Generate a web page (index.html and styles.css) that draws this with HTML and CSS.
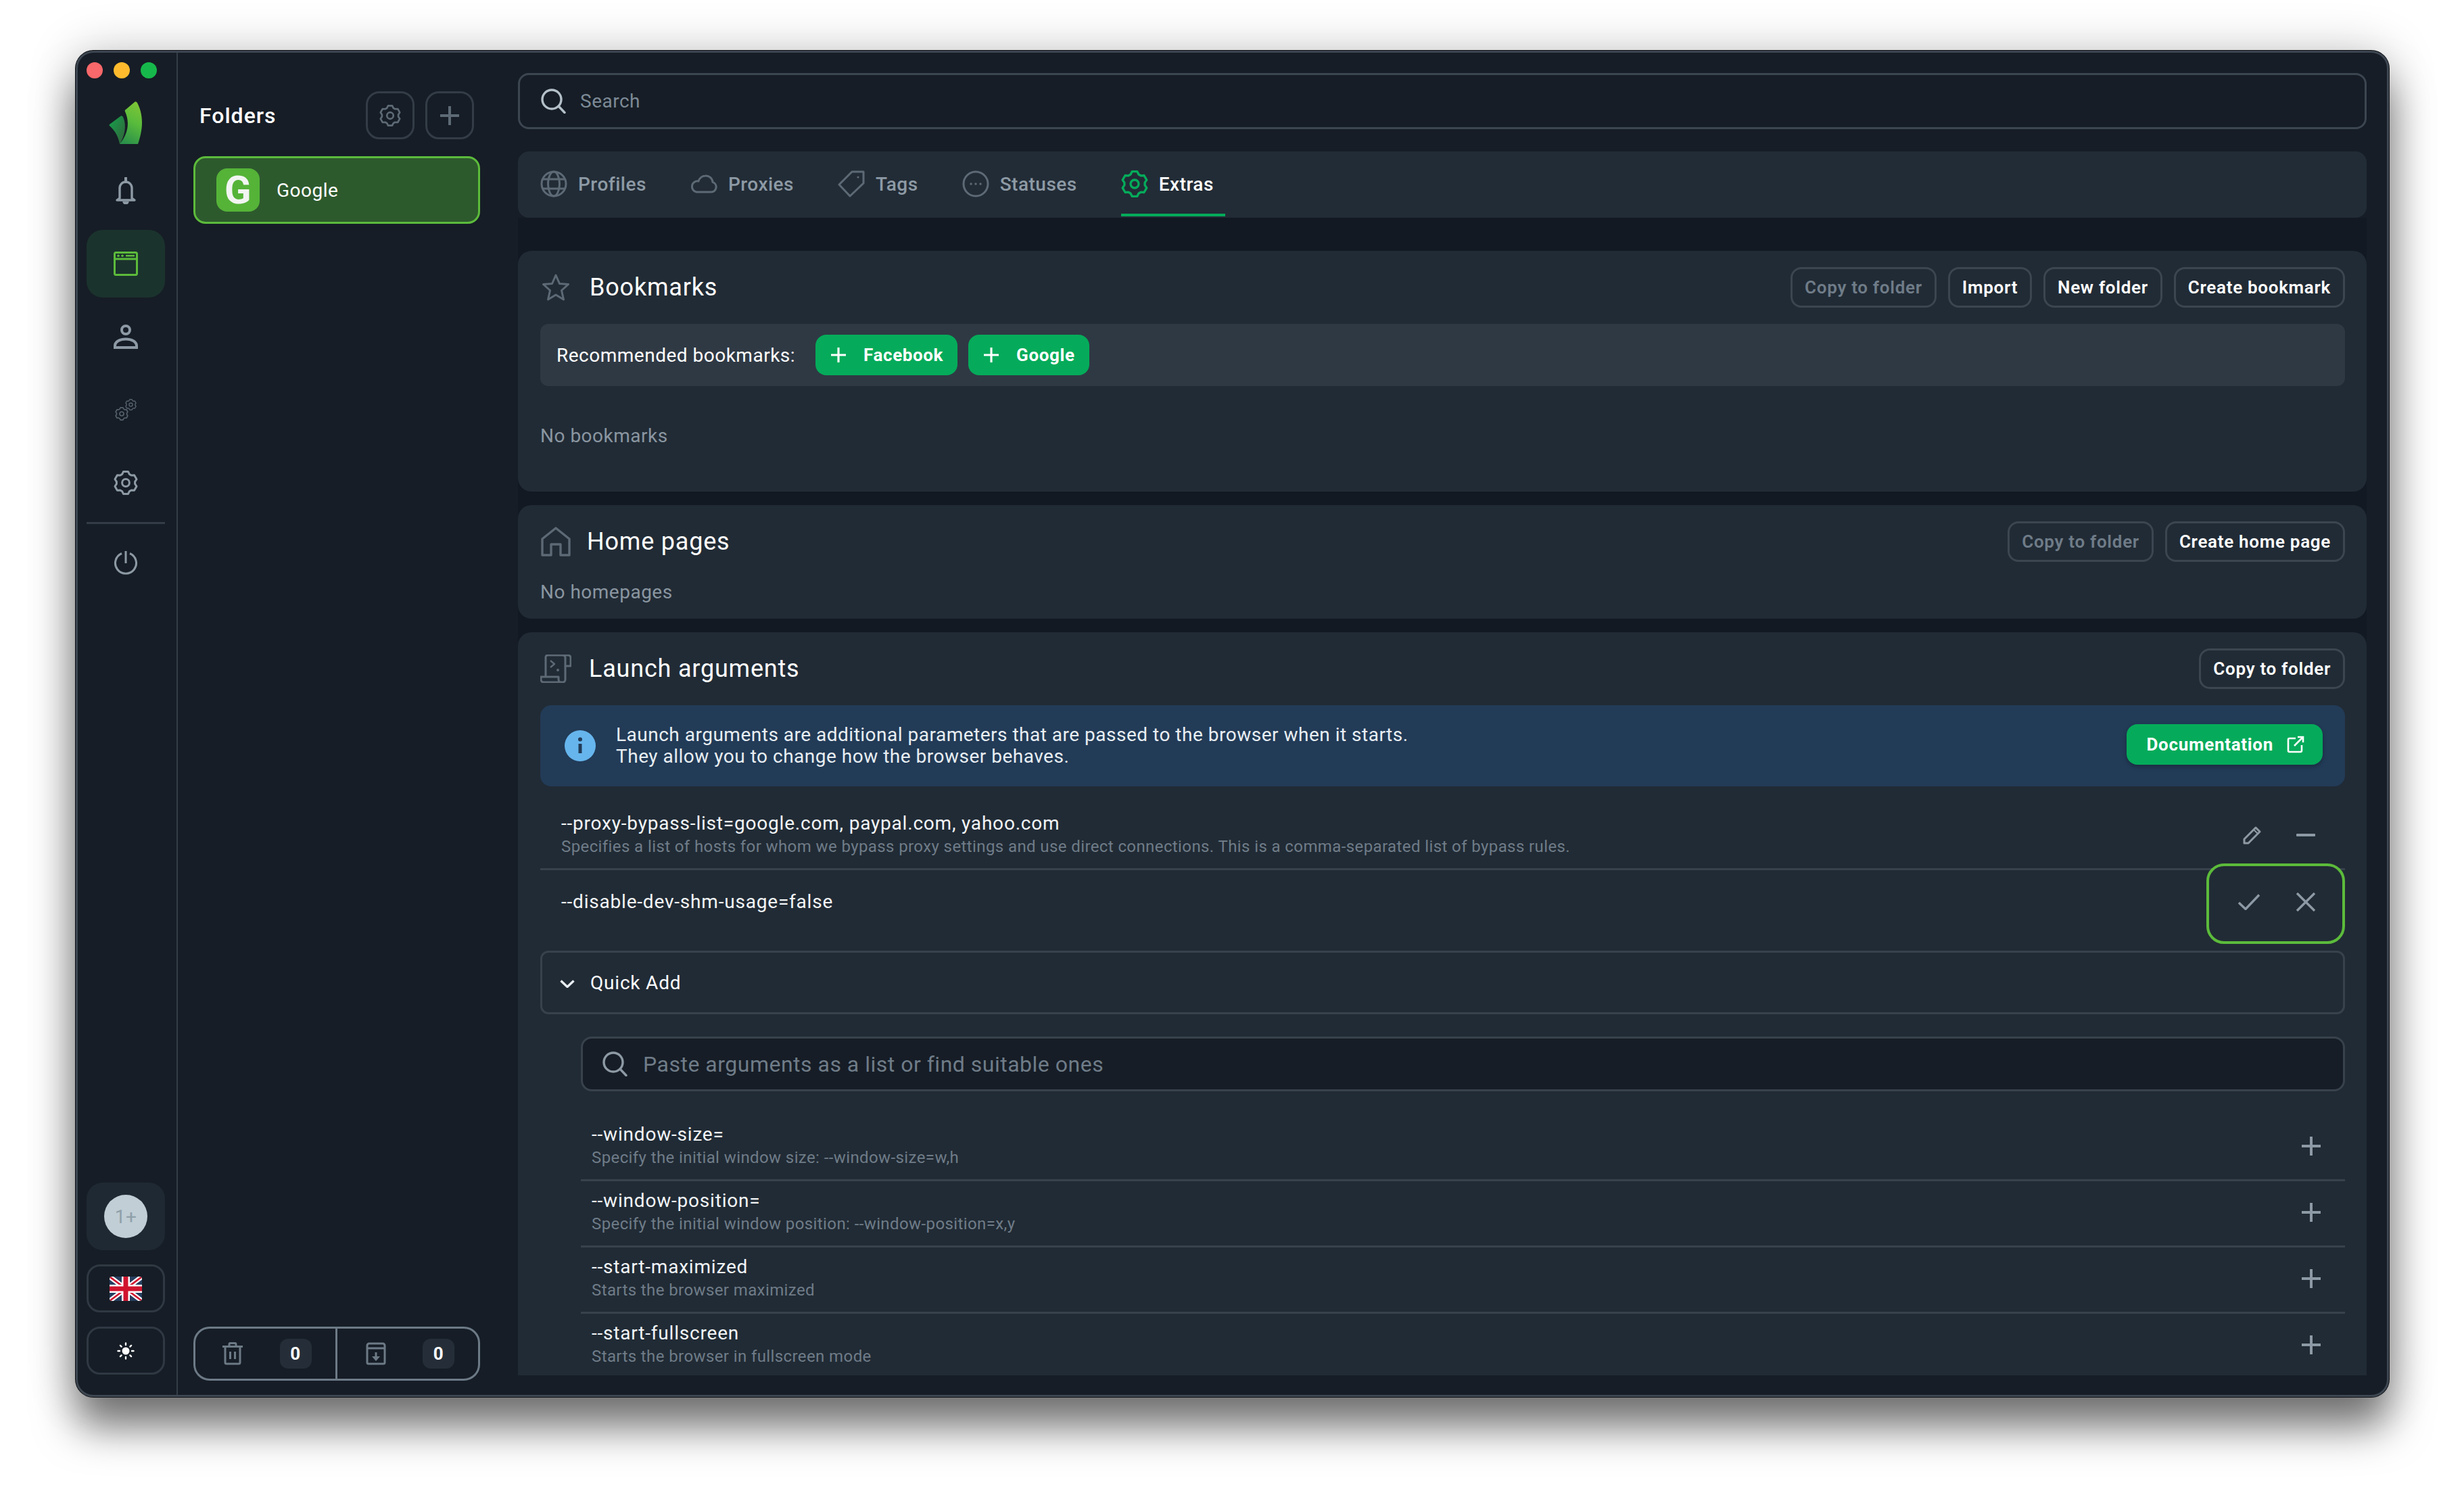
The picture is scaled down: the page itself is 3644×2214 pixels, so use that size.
FILE: index.html
```html
<!DOCTYPE html>
<html lang="en">
<head>
    <meta charset="UTF-8">
    <title>Extras</title>
    <link rel="stylesheet" href="styles.css">
</head>
<body>
    <svg class="sprite" width="0" height="0">
        <symbol id="gear" viewBox="0 0 24 24">
            <polygon points="8.4,3.6 9.7,1 14.3,1 15.6,3.6 17.47,4.68 20.38,4.51 22.68,8.49 21.07,10.92 21.07,13.08 22.68,15.51 20.38,19.49 17.47,19.32 15.6,20.4 14.3,23 9.7,23 8.4,20.4 6.53,19.32 3.62,19.49 1.32,15.51 2.93,13.08 2.93,10.92 1.32,8.49 3.62,4.51 6.53,4.68" fill="none" stroke="currentColor" stroke-width="2" stroke-linejoin="round"/>
            <circle cx="12" cy="12" r="3.6" fill="none" stroke="currentColor" stroke-width="2"/>
        </symbol>
        <symbol id="plus" viewBox="0 0 28 28">
            <path d="M14 0V28M0 14H28" fill="none" stroke="currentColor" stroke-width="4"/>
        </symbol>
        <symbol id="search" viewBox="0 0 37 37">
            <circle cx="16" cy="16" r="14" fill="none" stroke="currentColor" stroke-width="3.4"/>
            <path d="M26 26L35 35.5" fill="none" stroke="currentColor" stroke-width="3.4" stroke-linecap="round"/>
        </symbol>
    </svg>

    <div class="window">
        <aside class="rail">
            <div class="lights">
                <span class="light light-red"></span>
                <span class="light light-yellow"></span>
                <span class="light light-green"></span>
            </div>
            <svg class="logo" viewBox="0 0 54 66">
                <defs>
                    <linearGradient id="leaf-a" x1="0.6" y1="0" x2="0.3" y2="1">
                        <stop offset="0" stop-color="#7cc437"/>
                        <stop offset="0.45" stop-color="#58bb3c"/>
                        <stop offset="1" stop-color="#2a8f4a"/>
                    </linearGradient>
                    <linearGradient id="leaf-b" x1="0" y1="0" x2="1" y2="1">
                        <stop offset="0" stop-color="#14a34c"/>
                        <stop offset="1" stop-color="#34603a"/>
                    </linearGradient>
                </defs>
                <path d="M2 34L18 22Q20 20 22 23C28 36 24 52 17 63C15 52 10 43 2 36Q1 35 2 34Z" fill="url(#leaf-b)"/>
                <path d="M39 1Q41-1 43 2C50 16 54 34 44 63H17C28 50 33 33 25 15Q24 13 26 12Z" fill="url(#leaf-a)"/>
            </svg>
            <nav class="rail-nav">
                <div class="rail-item">
                    <svg class="rail-bell" viewBox="0 0 32 40" fill="none" stroke="#8d9aa5" stroke-width="3.4">
                        <path d="M7 31V16a9 9 0 0 1 18 0V31l4 3H3Z" stroke-linejoin="round"/>
                        <path d="M16 1v6" stroke-linecap="round" stroke-width="4"/>
                        <path d="M13 36a3 3 0 0 0 6 0" fill="#8d9aa5"/>
                    </svg>
                </div>
                <div class="rail-item rail-item-active">
                    <svg class="rail-icon" viewBox="0 0 36 36" fill="none" stroke="#5cbb3b" stroke-width="3">
                        <rect x="1.5" y="1.5" width="33" height="33" rx="2"/>
                        <path d="M1.5 11H34.5"/>
                        <circle cx="7" cy="6.2" r="1.8" fill="#5cbb3b" stroke="none"/>
                        <circle cx="13" cy="6.2" r="1.8" fill="#5cbb3b" stroke="none"/>
                        <path d="M18 6.2H31" stroke-width="2.6"/>
                    </svg>
                </div>
                <div class="rail-item">
                    <svg class="rail-icon" viewBox="0 0 36 36" fill="none" stroke="#8d9aa5" stroke-width="4">
                        <circle cx="18" cy="8" r="6"/>
                        <path d="M2 34V31.5C2 25 10 21.5 18 21.5S34 25 34 31.5V34Z"/>
                    </svg>
                </div>
                <div class="rail-item">
                    <svg class="rail-gears" viewBox="0 0 32 32">
                        <use href="#gear" x="0" y="12" width="20" height="20" color="#55616d"/>
                        <use href="#gear" x="15" y="0" width="17" height="17" color="#55616d"/>
                    </svg>
                </div>
                <div class="rail-item">
                    <svg class="rail-icon rail-muted"><use href="#gear"/></svg>
                </div>
                <div class="rail-sep"></div>
                <div class="rail-item">
                    <svg class="rail-icon" viewBox="0 0 36 36" fill="none" stroke="#8d9aa5" stroke-width="3">
                        <path d="M18 0V18"/>
                        <path d="M12 3.5A15.5 15.5 0 1 0 24 3.5"/>
                    </svg>
                </div>
            </nav>
            <div class="rail-bottom">
                <div class="plan-box"><span class="plan-badge">1+</span></div>
                <div class="rail-btn">
                    <svg class="flag" viewBox="0 0 48 36">
                        <rect width="48" height="36" fill="#263f60"/>
                        <path d="M0 0L48 36M48 0L0 36" stroke="#fff" stroke-width="7"/>
                        <path d="M0 0L48 36M48 0L0 36" stroke="#d0142e" stroke-width="2.6"/>
                        <path d="M24 0V36M0 18H48" stroke="#fff" stroke-width="12"/>
                        <path d="M24 0V36M0 18H48" stroke="#d0142e" stroke-width="7"/>
                    </svg>
                </div>
                <div class="rail-btn">
                    <svg class="sun" viewBox="0 0 26 26" fill="none" stroke="#fff" stroke-width="2.4" stroke-linecap="round">
                        <circle cx="13" cy="13" r="5.5" fill="#fff" stroke="none"/>
                        <path d="M13 1.5V4M13 22V24.5M1.5 13H4M22 13H24.5M4.9 4.9L6.6 6.6M19.4 19.4L21.1 21.1M4.9 21.1L6.6 19.4M19.4 6.6L21.1 4.9"/>
                    </svg>
                </div>
            </div>
        </aside>

        <section class="folders">
            <div class="folders-head">
                <h2 class="folders-title">Folders</h2>
                <div class="icon-btn"><svg class="icon-btn-gear"><use href="#gear"/></svg></div>
                <div class="icon-btn"><svg class="icon-btn-plus"><use href="#plus"/></svg></div>
            </div>
            <div class="folder-item">
                <span class="folder-badge">G</span>
                <span class="folder-name">Google</span>
            </div>
            <div class="bins">
                <div class="bin">
                    <svg class="bin-icon" viewBox="0 0 30 34" fill="none" stroke="#6c7a86" stroke-width="3">
                        <path d="M0 6.5H30M10 6V3a1.5 1.5 0 0 1 1.5-1.5h7A1.5 1.5 0 0 1 20 3V6"/>
                        <path d="M4 7V30a2 2 0 0 0 2 2H24a2 2 0 0 0 2-2V7"/>
                        <path d="M11.5 14V25M18.5 14V25"/>
                    </svg>
                    <span class="bin-count">0</span>
                </div>
                <div class="bin">
                    <svg class="bin-icon" viewBox="0 0 30 34" fill="none" stroke="#6c7a86" stroke-width="3">
                        <path d="M5 2H25a3 3 0 0 1 3 3V30a2 2 0 0 1-2 2H4a2 2 0 0 1-2-2V5A3 3 0 0 1 5 2Z"/>
                        <path d="M2 9H28"/>
                        <path d="M15 15V22" />
                        <path d="M9 21H21L15 28Z" fill="#6c7a86" stroke="none"/>
                    </svg>
                    <span class="bin-count">0</span>
                </div>
            </div>
        </section>

        <main class="main">
            <div class="search-bar">
                <svg class="search-icon search-icon-light"><use href="#search"/></svg>
                <span class="search-text">Search</span>
            </div>

            <div class="tabs">
                <div class="tab">
                    <svg class="tab-icon" viewBox="0 0 40 40" fill="none" stroke="currentColor" stroke-width="3">
                        <circle cx="20" cy="20" r="18"/>
                        <ellipse cx="20" cy="20" rx="8.5" ry="18"/>
                        <path d="M3 13H37M3 27H37"/>
                    </svg>
                    Profiles
                </div>
                <div class="tab">
                    <svg class="tab-icon" viewBox="0 0 40 40" fill="none" stroke="currentColor" stroke-width="3" stroke-linejoin="round">
                        <path d="M9 32H31A7.5 7.5 0 0 0 33 17.4 10 10 0 0 0 22 8 11 11 0 0 0 12 16 8 8 0 0 0 9 32Z"/>
                    </svg>
                    Proxies
                </div>
                <div class="tab">
                    <svg class="tab-icon" viewBox="0 0 40 40" fill="none" stroke="currentColor" stroke-width="3" stroke-linejoin="round">
                        <path d="M21 2H38V19L18 38 2 21Z"/>
                        <circle cx="30" cy="10" r="1.6" fill="currentColor" stroke="none"/>
                    </svg>
                    Tags
                </div>
                <div class="tab">
                    <svg class="tab-icon" viewBox="0 0 40 40" fill="none" stroke="currentColor" stroke-width="3">
                        <circle cx="20" cy="20" r="18"/>
                        <circle cx="13" cy="20" r="1.7" fill="currentColor" stroke="none"/>
                        <circle cx="20" cy="20" r="1.7" fill="currentColor" stroke="none"/>
                        <circle cx="27" cy="20" r="1.7" fill="currentColor" stroke="none"/>
                    </svg>
                    Statuses
                </div>
                <div class="tab tab-active">
                    <svg class="tab-icon"><use href="#gear"/></svg>
                    Extras
                </div>
            </div>

            <div class="scroll">
                <section class="panel panel-bookmarks">
                    <div class="panel-head">
                        <svg class="head-star" viewBox="0 0 40 40" fill="none" stroke="#5d6a76" stroke-width="3" stroke-linejoin="round">
                            <path d="M20 2L25.5 14.5 38.5 15.5 28.5 24.5 31.5 38 20 31 8.5 38 11.5 24.5 1.5 15.5 14.5 14.5Z"/>
                        </svg>
                        <h3 class="panel-title">Bookmarks</h3>
                        <div class="panel-actions">
                            <span class="btn btn-disabled">Copy to folder</span>
                            <span class="btn">Import</span>
                            <span class="btn">New folder</span>
                            <span class="btn">Create bookmark</span>
                        </div>
                    </div>
                    <div class="strip">
                        <span class="strip-label">Recommended bookmarks:</span>
                        <span class="btn-green"><svg class="btn-plus"><use href="#plus"/></svg>Facebook</span>
                        <span class="btn-green"><svg class="btn-plus"><use href="#plus"/></svg>Google</span>
                    </div>
                    <p class="empty empty-bookmarks">No bookmarks</p>
                </section>

                <section class="panel panel-home">
                    <div class="panel-head">
                        <svg class="head-house" viewBox="0 0 44 44" fill="none" stroke="#5d6a76" stroke-width="3.4" stroke-linejoin="round">
                            <path d="M2 18L22 2 42 18V42H29V26H15V42H2Z"/>
                        </svg>
                        <h3 class="panel-title">Home pages</h3>
                        <div class="panel-actions">
                            <span class="btn btn-disabled">Copy to folder</span>
                            <span class="btn">Create home page</span>
                        </div>
                    </div>
                    <p class="empty empty-home">No homepages</p>
                </section>

                <section class="panel panel-launch">
                    <div class="panel-head">
                        <svg class="head-script" viewBox="0 0 46 42" fill="none" stroke="#5d6a76" stroke-width="3" stroke-linejoin="round">
                            <path d="M8 33V4a3 3 0 0 1 3-3H41a4 4 0 0 1 4 4V17H37V5a4 4 0 0 0-4-4"/>
                            <path d="M37 17V37a4 4 0 0 1-4 4H5a4 4 0 0 1-4-4V33H27V37a4 4 0 0 0 4 4"/>
                            <path d="M15 9L21 14 15 19" stroke-width="2.4"/>
                            <circle cx="26" cy="23" r="2" fill="#5d6a76" stroke="none"/>
                        </svg>
                        <h3 class="panel-title">Launch arguments</h3>
                        <div class="panel-actions">
                            <span class="btn">Copy to folder</span>
                        </div>
                    </div>

                    <div class="info">
                        <svg class="info-icon" viewBox="0 0 46 46">
                            <circle cx="23" cy="23" r="23" fill="#66b5ed"/>
                            <circle cx="23" cy="13.5" r="3" fill="#223b57"/>
                            <path d="M23 20V34" stroke="#223b57" stroke-width="5"/>
                        </svg>
                        <p class="info-text">Launch arguments are additional parameters that are passed to the browser when it starts.<br>They allow you to change how the browser behaves.</p>
                        <span class="btn-doc">Documentation
                            <svg class="doc-icon" viewBox="0 0 26 26" fill="none" stroke="#fff" stroke-width="2.6">
                                <path d="M13 4H4a2 2 0 0 0-2 2V22a2 2 0 0 0 2 2H20a2 2 0 0 0 2-2V14"/>
                                <path d="M11 15L24 2M16 2H24V10"/>
                            </svg>
                        </span>
                    </div>

                    <div class="arg">
                        <div class="arg-body">
                            <div class="arg-name">--proxy-bypass-list=google.com, paypal.com, yahoo.com</div>
                            <div class="arg-desc">Specifies a list of hosts for whom we bypass proxy settings and use direct connections. This is a comma-separated list of bypass rules.</div>
                        </div>
                        <div class="arg-actions">
                            <svg class="arg-pencil" viewBox="0 0 28 28" fill="none" stroke="#8d9aa5" stroke-width="3" stroke-linejoin="round">
                                <path d="M2 26V20L19 3 25 9 8 26Z"/>
                                <path d="M16 6L22 12" stroke-width="2"/>
                            </svg>
                            <svg class="arg-minus" viewBox="0 0 28 4"><rect width="28" height="4" rx="1" fill="#8d9aa5"/></svg>
                        </div>
                    </div>

                    <div class="arg arg-editing">
                        <div class="arg-name">--disable-dev-shm-usage=false</div>
                        <div class="edit-box">
                            <svg class="edit-check" viewBox="0 0 32 24" fill="none" stroke="#8d9aa5" stroke-width="3.4">
                                <path d="M1 13L11 22.5 31 1.5"/>
                            </svg>
                            <svg class="edit-close" viewBox="0 0 28 28" fill="none" stroke="#8d9aa5" stroke-width="3.4">
                                <path d="M1 1L27 27M27 1L1 27"/>
                            </svg>
                        </div>
                    </div>

                    <div class="quick">
                        <svg class="quick-chevron" viewBox="0 0 22 12" fill="none" stroke="#e8eef2" stroke-width="3.4">
                            <path d="M1.5 1.5L11 10.5 20.5 1.5"/>
                        </svg>
                        <span class="quick-label">Quick Add</span>
                    </div>

                    <div class="quick-body">
                        <div class="quick-search">
                            <svg class="search-icon"><use href="#search"/></svg>
                            <span class="quick-placeholder">Paste arguments as a list or find suitable ones</span>
                        </div>
                        <div class="suggest">
                            <div class="arg-body">
                                <div class="arg-name">--window-size=</div>
                                <div class="arg-desc">Specify the initial window size: --window-size=w,h</div>
                            </div>
                            <svg class="suggest-plus"><use href="#plus"/></svg>
                        </div>
                        <div class="suggest">
                            <div class="arg-body">
                                <div class="arg-name">--window-position=</div>
                                <div class="arg-desc">Specify the initial window position: --window-position=x,y</div>
                            </div>
                            <svg class="suggest-plus"><use href="#plus"/></svg>
                        </div>
                        <div class="suggest">
                            <div class="arg-body">
                                <div class="arg-name">--start-maximized</div>
                                <div class="arg-desc">Starts the browser maximized</div>
                            </div>
                            <svg class="suggest-plus"><use href="#plus"/></svg>
                        </div>
                        <div class="suggest">
                            <div class="arg-body">
                                <div class="arg-name">--start-fullscreen</div>
                                <div class="arg-desc">Starts the browser in fullscreen mode</div>
                            </div>
                            <svg class="suggest-plus"><use href="#plus"/></svg>
                        </div>
                    </div>
                </section>
            </div>
        </main>
    </div>
</body>
</html>
```

FILE: styles.css
```css
* {
    box-sizing: border-box;
}
html, body {
    margin: 0;
    height: 100%;
}
body {
    font-family: Roboto, 'Liberation Sans', sans-serif;
    font-size: 28px;
    letter-spacing: 0.5px;
    font-variant-ligatures: none;
    background: #fff;
    color: #fff;
    padding: 75px 111px 148px 112px;
    overflow: hidden;
}
h2, h3, p {
    margin: 0;
    font-weight: 400;
}
svg {
    display: block;
    flex-shrink: 0;
}
.sprite {
    position: absolute;
}
.window {
    display: flex;
    height: 1991px;
    background: #161d26;
    border: 3px solid #3d4651;
    border-radius: 26px;
    box-shadow: 0 0 0 1px #0b0e12, 0 46px 60px rgba(0,0,0,0.5), 0 0 70px rgba(0,0,0,0.22);
    overflow: hidden;
}

/* left rail */
.rail {
    width: 148px;
    flex-shrink: 0;
    display: flex;
    flex-direction: column;
    padding: 14px 17px 30px 13px;
    border-right: 2px solid #333c47;
}
.lights {
    display: flex;
    gap: 16px;
}
.light {
    width: 24px;
    height: 24px;
    border-radius: 50%;
}
.light-red { background: #f9686a; }
.light-yellow { background: #ffbb2d; }
.light-green { background: #17b84b; }
.logo {
    width: 54px;
    height: 66px;
    margin: 34px 0 0 32px;
}
.rail-nav {
    display: flex;
    flex-direction: column;
    gap: 8px;
    margin-top: 16px;
}
.rail-item {
    height: 100px;
    border-radius: 24px;
    display: flex;
    align-items: center;
    justify-content: center;
}
.rail-item-active {
    background: #1b332d;
}
.rail-icon {
    width: 36px;
    height: 36px;
}
.rail-muted {
    color: #8d9aa5;
}
.rail-bell {
    width: 32px;
    height: 40px;
}
.rail-gears {
    width: 32px;
    height: 32px;
}
.rail-sep {
    height: 3px;
    margin: 0;
    background: #333c47;
}
.rail-bottom {
    margin-top: auto;
    display: flex;
    flex-direction: column;
    gap: 21px;
}
.plan-box {
    height: 100px;
    border-radius: 24px;
    background: #1f2933;
    display: flex;
    align-items: center;
    justify-content: center;
}
.plan-badge {
    width: 64px;
    height: 64px;
    border-radius: 50%;
    background: #c1ced5;
    color: #8fa0aa;
    display: flex;
    align-items: center;
    justify-content: center;
}
.rail-btn {
    height: 71px;
    border: 3px solid #2f3843;
    border-radius: 20px;
    display: flex;
    align-items: center;
    justify-content: center;
}
.flag {
    width: 48px;
    height: 36px;
    border-radius: 4px;
}
.sun {
    width: 26px;
    height: 26px;
}

/* folders column */
.folders {
    width: 503px;
    flex-shrink: 0;
    display: flex;
    flex-direction: column;
    padding: 57px 56px 21px 23px;
}
.folders-head {
    display: flex;
    align-items: center;
    gap: 16px;
    height: 71px;
    padding: 0 9px;
    margin-bottom: 25px;
}
.folders-title {
    font-size: 32px;
    font-weight: 500;
    letter-spacing: 1px;
    margin-right: auto;
}
.icon-btn {
    width: 72px;
    height: 71px;
    border: 3px solid #333c47;
    border-radius: 20px;
    display: flex;
    align-items: center;
    justify-content: center;
    color: #5d6a76;
}
.icon-btn-gear {
    width: 32px;
    height: 32px;
}
.icon-btn-plus {
    width: 28px;
    height: 28px;
}
.folder-item {
    height: 100px;
    display: flex;
    align-items: center;
    gap: 25px;
    padding-left: 31px;
    background: #2d5a2d;
    border: 3px solid #5cbb3b;
    border-radius: 18px;
}
.folder-badge {
    width: 64px;
    height: 64px;
    border-radius: 16px;
    background: #55b338;
    color: #f2f5f2;
    font-size: 58px;
    font-weight: 700;
    display: flex;
    align-items: center;
    justify-content: center;
}
.bins {
    margin-top: auto;
    height: 80px;
    display: flex;
    border: 3px solid #6c7a86;
    border-radius: 24px;
}
.bin {
    flex: 1;
    display: flex;
    align-items: center;
    justify-content: space-between;
    padding: 0 35px 0 40px;
}
.bin + .bin {
    padding-left: 42px;
    border-left: 3px solid #6c7a86;
}
.bin-icon {
    width: 30px;
    height: 34px;
}
.bin-count {
    width: 47px;
    height: 44px;
    border-radius: 12px;
    background: #252e38;
    font-size: 26px;
    font-weight: 700;
    display: flex;
    align-items: center;
    justify-content: center;
}

/* main area */
.main {
    flex: 1;
    min-width: 0;
    display: flex;
    flex-direction: column;
    padding: 30px 30px 29px 0;
}
.search-bar {
    height: 83px;
    display: flex;
    align-items: center;
    gap: 21px;
    padding-left: 31px;
    border: 3px solid #3c4651;
    border-radius: 16px;
}
.search-icon {
    width: 37px;
    height: 37px;
    color: #8d9aa5;
}
.search-icon-light {
    color: #b4c0c9;
}
.search-text {
    color: #7d8a96;
}
.tabs {
    height: 98px;
    margin-top: 33px;
    padding-left: 33px;
    display: flex;
    align-items: flex-start;
    gap: 48px;
    background: #222c36;
    border-radius: 16px;
    flex-shrink: 0;
}
.tab {
    height: 96px;
    padding: 4px 17px 0 0;
    display: flex;
    align-items: center;
    gap: 16px;
    border-bottom: 4px solid transparent;
    color: #8d9aa5;
    font-weight: 500;
    letter-spacing: 0.5px;
}
.tab-icon {
    width: 40px;
    height: 40px;
    color: #5d6a76;
}
.tab-active {
    color: #fff;
    border-bottom-color: #05ab5a;
}
.tab-active .tab-icon {
    color: #05ab5a;
}
.scroll {
    flex: 1;
    min-height: 0;
    overflow: hidden;
    background: #121923;
    padding-top: 49px;
    display: flex;
    flex-direction: column;
    gap: 20px;
}

/* panels */
.panel {
    background: #212b35;
    border-radius: 20px;
    padding: 24px 32px 0 33px;
    flex-shrink: 0;
}
.panel-bookmarks {
    height: 356px;
}
.panel-home {
    height: 168px;
}
.panel-launch {
    padding-bottom: 40px;
}
.panel-head {
    display: flex;
    align-items: center;
    height: 60px;
}
.panel-title {
    font-size: 36px;
    letter-spacing: 0.8px;
}
.panel-actions {
    margin-left: auto;
    display: flex;
    gap: 17px;
}
.head-star {
    width: 40px;
    height: 40px;
    margin: 0 30px 0 3px;
}
.head-house {
    width: 44px;
    height: 44px;
    margin: 0 24px 0 1px;
}
.head-script {
    width: 46px;
    height: 42px;
    margin-right: 26px;
}
.btn {
    height: 60px;
    padding: 0 18px;
    display: flex;
    align-items: center;
    border: 3px solid #3c4651;
    border-radius: 16px;
    font-size: 26px;
    font-weight: 600;
    letter-spacing: 0.7px;
}
.btn-disabled {
    color: #6f7c88;
}
.strip {
    height: 92px;
    margin-top: 24px;
    display: flex;
    align-items: center;
    gap: 16px;
    padding-left: 24px;
    background: #2f3944;
    border-radius: 12px;
}
.strip-label {
    margin-right: 14px;
}
.btn-green {
    height: 60px;
    padding: 0 21px 0 23px;
    display: flex;
    align-items: center;
    gap: 26px;
    background: #05ab5a;
    border-radius: 16px;
    font-size: 26px;
    font-weight: 700;
    letter-spacing: 0.6px;
}
.btn-plus {
    width: 22px;
    height: 22px;
}
.empty {
    color: #8a96a1;
    line-height: 36px;
}
.empty-bookmarks {
    margin-top: 56px;
}
.empty-home {
    margin-top: 27px;
}

/* launch arguments */
.info {
    height: 120px;
    margin-top: 24px;
    display: flex;
    align-items: center;
    padding: 0 33px 0 36px;
    background: #223b57;
    border-radius: 16px;
}
.info-icon {
    width: 46px;
    height: 46px;
    margin-right: 30px;
}
.info-text {
    line-height: 32px;
    color: #e8eef2;
}
.btn-doc {
    margin: 0 0 4px auto;
    height: 60px;
    padding: 0 27px 0 29px;
    display: flex;
    align-items: center;
    gap: 20px;
    background: #05ab5a;
    border-radius: 16px;
    font-size: 26px;
    font-weight: 700;
    letter-spacing: 0.7px;
    box-shadow: 0 3px 6px rgba(0,0,0,0.25);
}
.doc-icon {
    width: 26px;
    height: 26px;
}
.arg {
    display: flex;
    align-items: center;
    padding: 38px 44px 15px 31px;
    border-bottom: 3px solid #38424d;
}
.arg-body {
    flex: 1;
    min-width: 0;
}
.arg-name {
    line-height: 34px;
    letter-spacing: 0.8px;
    color: #f2f5f7;
}
.arg-desc {
    font-size: 24px;
    line-height: 34px;
    letter-spacing: 0.4px;
    color: #6f7c88;
}
.arg-actions {
    display: flex;
    align-items: center;
    gap: 51px;
}
.arg-pencil {
    width: 28px;
    height: 28px;
}
.arg-minus {
    width: 28px;
    height: 4px;
}
.arg-editing {
    position: relative;
    height: 101px;
    padding: 30px 0 37px 31px;
    border-bottom: 0;
}
.edit-box {
    position: absolute;
    top: -10px;
    right: 0;
    width: 205px;
    height: 119px;
    display: flex;
    align-items: center;
    gap: 54px;
    padding: 0 0 5px 43px;
    border: 4px solid #5cbb3b;
    border-radius: 26px;
    background: #212b35;
}
.edit-check {
    width: 32px;
    height: 24px;
}
.edit-close {
    width: 28px;
    height: 28px;
}
.quick {
    height: 94px;
    margin-top: 18px;
    display: flex;
    align-items: center;
    gap: 23px;
    padding-left: 26px;
    border: 3px solid #38424d;
    border-radius: 12px;
}
.quick-chevron {
    width: 22px;
    height: 12px;
    margin-top: 3px;
}
.quick-label {
    letter-spacing: 0.8px;
}
.quick-body {
    margin: 33px 0 0 60px;
}
.quick-search {
    height: 81px;
    display: flex;
    align-items: center;
    gap: 23px;
    padding-left: 29px;
    background: #161d26;
    border: 3px solid #38424d;
    border-radius: 16px;
    margin-bottom: 35px;
}
.quick-placeholder {
    font-size: 32px;
    color: #6f7c88;
}
.suggest {
    display: flex;
    align-items: center;
    padding: 12px 36px 15px 16px;
    border-bottom: 3px solid #38424d;
}
.suggest-plus {
    width: 28px;
    height: 28px;
    color: #8d9aa5;
}
```
